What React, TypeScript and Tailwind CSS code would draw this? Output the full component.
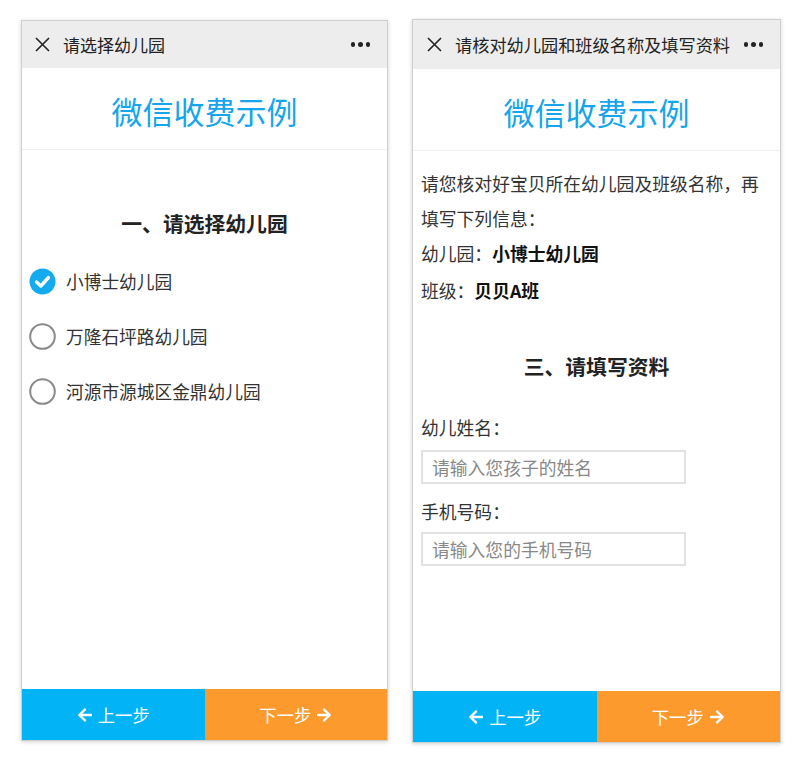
import React from "react";
import { FaArrowLeft, FaArrowRight } from "react-icons/fa";

const font = { fontFamily: '"Noto Sans CJK SC", "Noto Sans", sans-serif' };

function CloseIcon() {
  return (
    <svg width="17" height="17" viewBox="0 0 17 17" className="shrink-0">
      <path d="M2 2 L15 15 M15 2 L2 15" stroke="#222" strokeWidth="1.6" fill="none" />
    </svg>
  );
}

function Dots() {
  return (
    <div className="flex items-center gap-[3px]">
      <span className="block w-[4.5px] h-[4.5px] rounded-full bg-[#222]" />
      <span className="block w-[4.5px] h-[4.5px] rounded-full bg-[#222]" />
      <span className="block w-[4.5px] h-[4.5px] rounded-full bg-[#222]" />
    </div>
  );
}

function Header({ title }: { title: string }) {
  return (
    <div className="h-[47px] bg-[#ededed] flex items-center pl-[12px] pr-[17px] shrink-0">
      <CloseIcon />
      <div className="ml-[12px] text-[17px] text-[#222] flex-1 whitespace-nowrap">{title}</div>
      <Dots />
    </div>
  );
}

function Banner() {
  return (
    <div className="h-[82px] flex items-center justify-center border-b border-[#f0f0f0] shrink-0">
      <div className="text-[31px] text-[#16a5ea] leading-none pt-[4px]">微信收费示例</div>
    </div>
  );
}

function Buttons() {
  return (
    <div className="h-[51px] flex shrink-0 mt-auto">
      <div className="flex-1 bg-[#02b4f6] flex items-center justify-center gap-[5px] text-white text-[17.3px]">
        <FaArrowLeft size={16} />
        <span>上一步</span>
      </div>
      <div className="flex-1 bg-[#fc9a2e] flex items-center justify-center gap-[5px] text-white text-[17.3px]">
        <span>下一步</span>
        <FaArrowRight size={16} />
      </div>
    </div>
  );
}

function Checked() {
  return (
    <svg width="27" height="27" viewBox="0 0 27 27" className="shrink-0">
      <circle cx="13.5" cy="13.5" r="13" fill="#14aaf0" />
      <path d="M7.5 14 L11.8 18 L19.5 9.5" stroke="#fff" strokeWidth="3.4" fill="none" strokeLinecap="round" strokeLinejoin="round" />
    </svg>
  );
}

function Unchecked() {
  return (
    <svg width="27" height="27" viewBox="0 0 27 27" className="shrink-0">
      <circle cx="13.5" cy="13.5" r="12.3" fill="none" stroke="#8a8a8a" strokeWidth="2" />
    </svg>
  );
}

function Radio({ label, checked }: { label: string; checked?: boolean }) {
  return (
    <div className="h-[55px] flex items-center gap-[10px]">
      {checked ? <Checked /> : <Unchecked />}
      <span className="text-[17.7px] text-[#333]">{label}</span>
    </div>
  );
}

function LeftPhone() {
  return (
    <div className="mt-[1px] w-[367px] h-[721px] border border-[#cfcfcf] shadow-[0_1px_4px_rgba(0,0,0,0.18)] bg-white flex flex-col overflow-hidden">
      <Header title="请选择幼儿园" />
      <Banner />
      <div className="pt-[59px] text-center text-[20.8px] font-bold text-[#222] leading-[28px]">一、请选择幼儿园</div>
      <div className="pl-[7px] pt-[17px] flex flex-col">
        <Radio label="小博士幼儿园" checked />
        <Radio label="万隆石坪路幼儿园" />
        <Radio label="河源市源城区金鼎幼儿园" />
      </div>
      <Buttons />
    </div>
  );
}

function RightPhone() {
  return (
    <div className="w-[369px] h-[724px] border border-[#cfcfcf] shadow-[0_1px_4px_rgba(0,0,0,0.18)] bg-white flex flex-col overflow-hidden">
      <div className="h-[49px] bg-[#ededed] flex items-center pl-[13px] pr-[17px] shrink-0">
        <CloseIcon />
        <div className="ml-[12px] text-[17.2px] text-[#222] flex-1 whitespace-nowrap">请核对幼儿园和班级名称及填写资料</div>
        <Dots />
      </div>
      <Banner />
      <div className="px-[8px] pt-[15px] text-[17.8px] text-[#333] leading-[35px]">
        <div className="whitespace-nowrap">请您核对好宝贝所在幼儿园及班级名称，再</div>
        <div>填写下列信息：</div>
        <div>
          幼儿园：<span className="font-bold text-[#111]">小博士幼儿园</span>
        </div>
        <div className="mt-[2px]">
          班级：<span className="font-bold text-[#111]">贝贝A班</span>
        </div>
      </div>
      <div className="pt-[44px] text-center text-[20.8px] font-bold text-[#222] leading-[28px]">三、请填写资料</div>
      <div className="px-[8px] pt-[35px] text-[17.8px] text-[#333]">
        <div className="leading-[24px]">幼儿姓名：</div>
        <div className="mt-[11px] w-[265px] h-[34px] border-2 border-[#e2e2e2] flex items-center pl-[9px] text-[#888]">请输入您孩子的姓名</div>
        <div className="mt-[15px] leading-[24px]">手机号码：</div>
        <div className="mt-[9px] w-[265px] h-[34px] border-2 border-[#e2e2e2] flex items-center pl-[9px] text-[#888]">请输入您的手机号码</div>
      </div>
      <Buttons />
    </div>
  );
}

export default function App() {
  return (
    <div className="w-[800px] h-[764px] bg-white flex items-start pl-[21px] pt-[19px] gap-[24px]" style={font}>
      <LeftPhone />
      <RightPhone />
    </div>
  );
}
